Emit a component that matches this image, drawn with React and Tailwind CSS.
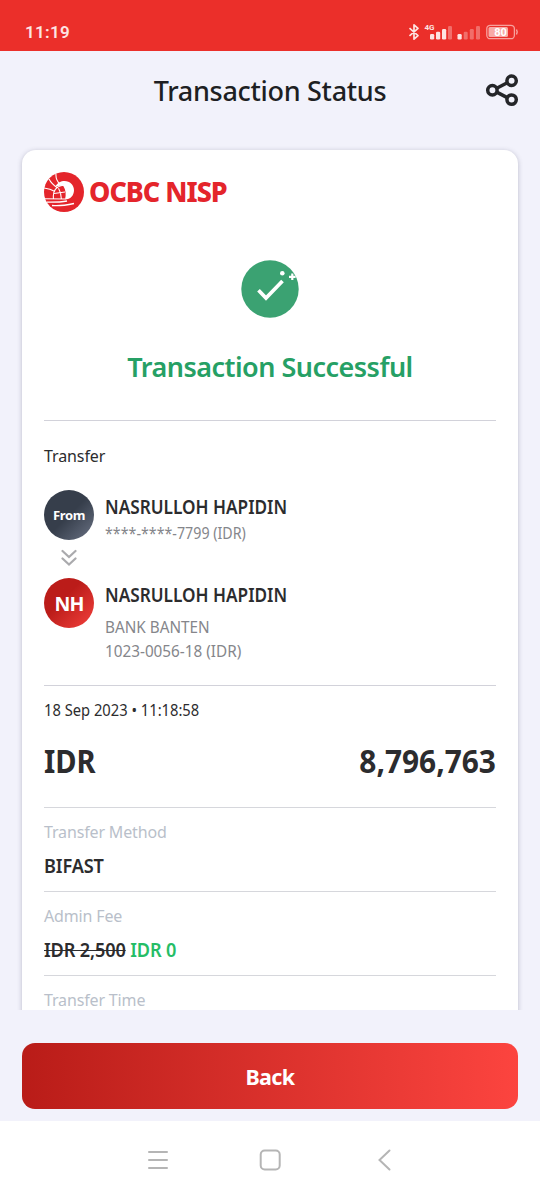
const sender = { badge: "From", name: "NASRULLOH HAPIDIN", account: "****-****-7799 (IDR)" };
const receiver = { badge: "NH", name: "NASRULLOH HAPIDIN", bank: "BANK BANTEN", account: "1023-0056-18 (IDR)" };

function StatusBar() {
  return (
    <div className="flex h-[51px] items-center justify-between bg-[#eb2f2a] pl-[25px] pr-[21px] pt-[13px] text-[#fde4e2]">
      <span className="font-['Roboto',sans-serif] text-[17px] font-semibold leading-5 tracking-[0.3px]">11:19</span>
      <div className="flex items-center">
        <svg width="12" height="18" viewBox="0 0 12 18" fill="none" stroke="currentColor" strokeWidth="1.7">
          <path d="M1.5 5.2 10 12.6 6 16.2V1.8l4 3.6-8.5 7.4" strokeLinejoin="round" />
        </svg>
        <svg className="ml-1" width="28" height="18" viewBox="0 0 28 18" fill="currentColor">
          <text x="0.5" y="6.8" fontFamily="Roboto, sans-serif" fontSize="8" fontWeight="700">4G</text>
          <rect x="6" y="11" width="4.2" height="5.5" rx="1.2" />
          <rect x="12" y="8.7" width="4.2" height="7.8" rx="1.2" />
          <rect x="18" y="6" width="4.2" height="10.5" rx="1.2" />
          <rect x="24" y="3" width="4" height="13.5" rx="1.2" opacity="0.35" />
        </svg>
        <svg className="ml-[5px]" width="23" height="18" viewBox="0 0 23 18" fill="currentColor">
          <rect x="0.5" y="11" width="4.2" height="5.5" rx="1.2" />
          <rect x="6.7" y="8.7" width="4" height="7.8" rx="1.2" opacity="0.35" />
          <rect x="12.8" y="6" width="4" height="10.5" rx="1.2" opacity="0.35" />
          <rect x="19" y="3" width="4" height="13.5" rx="1.2" opacity="0.35" />
        </svg>
        <svg className="ml-1.5" width="33" height="18" viewBox="0 0 33 18">
          <rect x="0.8" y="2.3" width="27.6" height="13.4" rx="3.5" fill="none" stroke="#f7a19d" strokeWidth="1.3" />
          <rect x="2.5" y="4" width="19.5" height="10" rx="1.5" fill="#f8aaa6" />
          <path d="M30.5 6.5q1.4 2.5 0 5" fill="none" stroke="#f8aaa6" strokeWidth="1.4" />
          <text x="14.5" y="13" textAnchor="middle" fontFamily="Roboto, sans-serif" fontSize="11" fontWeight="700" fill="#fff">80</text>
        </svg>
      </div>
    </div>
  );
}

function ShareIcon() {
  return (
    <svg width="34" height="34" viewBox="0 0 34 34" fill="none" stroke="#252629" strokeWidth="3.5">
      <path d="M12.2 15 21.8 10M12.2 19.4l9.6 5" />
      <circle cx="7.4" cy="17.2" r="4.7" />
      <circle cx="26.6" cy="7.8" r="4.7" />
      <circle cx="26.6" cy="26.6" r="4.7" />
    </svg>
  );
}

function BankLogo() {
  return (
    <div className="flex items-center gap-[5px]">
      <svg width="40" height="40" viewBox="0 0 40 40">
        <circle cx="20" cy="20" r="20" fill="#e4252b" />
        <path d="M11.5 14.5C13.500 10.500 17 9 20.500 9 26 9 30 13.200 30 18.200c0 5-3.500 9.300-9 9.300 1.300-5 .8-9.500-1.500-13.300-3.500-1.200-6 .3-8 .3Z" fill="#fff" />
        <path d="M9.500 26.500C8.500 19 12 14 19.500 13.200M0 26.800 21.500 27M12 1.500c-.5 4.500 1.500 8.500 4.500 11.500M5 7c2 4 5 6.500 8.500 9M0 16c4 .5 7.500 1.500 11 3.500M10 21.500l11-1.500M14.500 16.200c1.800 3 2.700 6.500 2.800 10.300" fill="none" stroke="#fff" strokeWidth="1.1" />
        <path d="M3 30.200c7 0 13 .2 20-1.200M8 33.500c6 .6 13-.1 22-2" fill="none" stroke="#fff" strokeWidth="1.3" />
      </svg>
      <span className="origin-left scale-x-[0.98] text-[27.5px] font-extrabold leading-[38px] tracking-[-1px] text-[#e4252b]">OCBC NISP</span>
    </div>
  );
}

function SuccessIcon() {
  return (
    <svg width="59" height="58" viewBox="0 0 59 58" className="mx-auto">
      <circle cx="29" cy="29" r="28.7" fill="#3ba272" />
      <path d="m17.5 30.2 7.5 7.8 16.5-17" fill="none" stroke="#fff" strokeWidth="3.7" />
      <circle cx="41.3" cy="13.3" r="2.3" fill="#fff" />
      <path d="M51.3 13.5v6.6M48 16.8h6.6" stroke="#fff" strokeWidth="2.2" />
    </svg>
  );
}

function Detail({ label, children }) {
  return (
    <div className="h-[84px] border-t border-[#d6d7dc] pt-3">
      <p className="text-base leading-6 tracking-[-0.15px] text-[#b9bfca]">{label}</p>
      <p className="mt-[9px] origin-left scale-x-[0.93] text-[19.5px] font-semibold leading-[26px] tracking-[-0.15px]">{children}</p>
    </div>
  );
}

export default function App() {
  return (
    <div className="flex h-[1200px] w-[540px] flex-col overflow-hidden bg-[#f2f2fb] font-['Noto_Sans',sans-serif] text-[#2c2c2e]">
      <StatusBar />

      <header className="grid h-[77px] grid-cols-[1fr_auto_1fr] items-center px-[21px]">
        <h1 className="col-start-2 pt-0.5 text-[27px] font-medium leading-9 tracking-[-0.3px] text-[#1e1f23]">Transaction Status</h1>
        <button className="justify-self-end">
          <ShareIcon />
        </button>
      </header>

      <main className="h-[882px] shrink-0 overflow-hidden px-[22px] pt-[22px]">
        <div className="h-[900px] rounded-[14px] bg-white px-[22px] pt-[22px] shadow-[0_1px_5px_rgba(60,60,90,0.3)]">
          <BankLogo />

          <div className="mt-[48px]">
            <SuccessIcon />
            <h2 className="mt-[31px] text-center text-[27px] font-semibold leading-9 tracking-[-0.52px] text-[#26a065]">
              Transaction Successful
            </h2>
          </div>

          <section className="mt-[35px] h-[265px] border-t border-[#d2d2da] pt-[23px]">
            <p className="text-base leading-6 tracking-[-0.1px]">Transfer</p>

            <div className="mt-[22px] flex h-[50px] gap-[11px]">
              <div className="flex size-[50px] shrink-0 items-center justify-center rounded-full bg-linear-to-br from-[#363e4b] from-50% to-[#6b7385] pt-0.5 text-[13px] font-bold tracking-[-0.4px] text-white">
                {sender.badge}
              </div>
              <div className="pt-[5px]">
                <p className="origin-left scale-x-[0.882] whitespace-nowrap text-[19.5px] font-semibold leading-6">{sender.name}</p>
                <p className="mt-0.5 origin-left scale-x-[0.89] whitespace-nowrap text-base leading-6 text-[#85868b]">{sender.account}</p>
              </div>
            </div>

            <svg className="ml-[17px] mt-[9px]" width="16" height="18" viewBox="0 0 16 18" fill="none" stroke="#aaaaad" strokeWidth="2.2">
              <path d="m1.5 2 6.5 6 6.5-6M1.5 9.5l6.5 6 6.5-6" strokeLinecap="round" />
            </svg>

            <div className="mt-[11px] flex gap-[11px]">
              <div className="flex size-[50px] shrink-0 items-center justify-center rounded-full bg-linear-to-br from-[#bb1c19] from-40% to-[#f4403c] pt-0.5 text-[19.5px] font-bold tracking-[-0.8px] text-white">
                {receiver.badge}
              </div>
              <div className="pt-[5px]">
                <p className="origin-left scale-x-[0.882] whitespace-nowrap text-[19.5px] font-semibold leading-6">{receiver.name}</p>
                <p className="mt-2 origin-left scale-x-[0.955] text-base leading-6 text-[#85868b]">{receiver.bank}</p>
                <p className="origin-left scale-x-[0.955] text-base leading-6 text-[#85868b]">{receiver.account}</p>
              </div>
            </div>
          </section>

          <section className="h-[122px] border-t border-[#d2d2da] pt-3">
            <p className="origin-left scale-x-[0.92] text-base leading-6">18 Sep 2023 • 11:18:58</p>
            <div className="mt-[17px] flex justify-between text-[33px] font-bold leading-[44px]">
              <span className="origin-left scale-x-[0.88]">IDR</span>
              <span className="origin-right scale-x-[0.905]">8,796,763</span>
            </div>
          </section>

          <Detail label="Transfer Method">BIFAST</Detail>
          <Detail label="Admin Fee">
            <span className="line-through decoration-1">IDR 2,500</span> <span className="text-[#25bd66]">IDR 0</span>
          </Detail>
          <Detail label="Transfer Time" />
        </div>
      </main>

      <div className="h-[111px] shrink-0 px-[22px] pt-[33px]">
        <button className="h-[66px] w-full rounded-[13px] bg-linear-to-r from-[#b91c18] to-[#fc443f] pt-[3px] text-[21.5px] font-bold tracking-[-0.6px] text-white">
          Back
        </button>
      </div>

      <nav className="flex h-[79px] shrink-0 items-center justify-center gap-[91px] bg-white pb-px text-[#b5b5b5]">
        <svg width="22" height="22" viewBox="0 0 22 22" fill="none" stroke="currentColor" strokeWidth="2" strokeLinecap="round">
          <path d="M3 3h18M3 11h18M3 19h18" />
        </svg>
        <svg width="22" height="22" viewBox="0 0 22 22" fill="none" stroke="currentColor" strokeWidth="2">
          <rect x="1.7" y="1.500" width="19" height="19" rx="4" />
        </svg>
        <svg width="22" height="22" viewBox="0 0 22 22" fill="none" stroke="currentColor" strokeWidth="2" strokeLinecap="round">
          <path d="M17.500 1.500 7.500 11l10 9.500" />
        </svg>
      </nav>
    </div>
  );
}
